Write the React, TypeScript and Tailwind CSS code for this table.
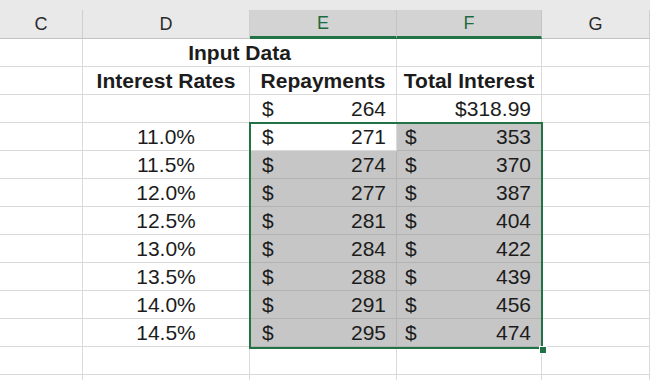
import React from 'react';

const grid = 'grid grid-cols-[83px_167px_147px_145px_1fr]';
const cell = 'h-[28px] border-r border-b border-[#dadada] flex items-center text-[21px] leading-none text-[#1c1c1c] overflow-hidden whitespace-nowrap';
const sel = 'h-[28px] border-r border-b border-[#b3b3b3] bg-[#c6c6c6] flex items-center text-[21px] leading-none text-[#1c1c1c] overflow-hidden whitespace-nowrap';

const rows = [
  { rate: '11.0%', pay: 271, int: 353 },
  { rate: '11.5%', pay: 274, int: 370 },
  { rate: '12.0%', pay: 277, int: 387 },
  { rate: '12.5%', pay: 281, int: 404 },
  { rate: '13.0%', pay: 284, int: 422 },
  { rate: '13.5%', pay: 288, int: 439 },
  { rate: '14.0%', pay: 291, int: 456 },
  { rate: '14.5%', pay: 295, int: 474 },
];

function ColHead({ label, active }: { label: string; active?: boolean }) {
  return (
    <div
      className={
        active
          ? 'h-[29px] bg-[#d3d3d3] border-r border-[#c4c4c4] border-b-[3px] border-b-[#217346] flex items-center justify-center text-[18px] text-[#1e6b41]'
          : 'h-[29px] border-r border-[#cfcfcf] border-b border-b-[#c2c2c2] flex items-center justify-center text-[18px] text-[#2b2b2b]'
      }
    >
      {label}
    </div>
  );
}

export default function App() {
  return (
    <div
      className="relative w-[650px] h-[380px] overflow-hidden bg-white"
      style={{ fontFamily: '"Liberation Sans", Arial, sans-serif' }}
    >
      {/* column headers */}
      <div className="bg-[#e9e9e9] pt-[10px]">
        <div className={grid}>
          <ColHead label="C" />
          <ColHead label="D" />
          <ColHead label="E" active />
          <ColHead label="F" active />
          <ColHead label="G" />
        </div>
      </div>

      {/* row 1 */}
      <div className={grid}>
        <div className={cell} />
        <div className={`${cell} col-span-2 justify-center font-bold`}>Input Data</div>
        <div className={cell} />
        <div className={cell} />
      </div>

      {/* row 2 */}
      <div className={grid}>
        <div className={cell} />
        <div className={`${cell} justify-center font-bold`}>Interest Rates</div>
        <div className={`${cell} justify-center font-bold`}>Repayments</div>
        <div className={`${cell} justify-center font-bold`}>Total Interest</div>
        <div className={cell} />
      </div>

      {/* row 3 */}
      <div className={grid}>
        <div className={cell} />
        <div className={cell} />
        <div className={`${cell} justify-between pl-[12px] pr-[10px]`}>
          <span>$</span>
          <span>264</span>
        </div>
        <div className={`${cell} justify-end pr-[10px]`}>$318.99</div>
        <div className={cell} />
      </div>

      {rows.map((r, i) => (
        <div key={r.rate} className={grid}>
          <div className={cell} />
          <div className={`${cell} justify-center`}>{r.rate}</div>
          <div className={`${i === 0 ? cell : sel} justify-between pl-[12px] pr-[10px]`}>
            <span>$</span>
            <span>{r.pay}</span>
          </div>
          <div className={`${sel} justify-between pl-[8px] pr-[10px]`}>
            <span>$</span>
            <span>{r.int}</span>
          </div>
          <div className={cell} />
        </div>
      ))}

      {[0, 1].map((k) => (
        <div key={k} className={grid}>
          <div className={cell} />
          <div className={cell} />
          <div className={cell} />
          <div className={cell} />
          <div className={cell} />
        </div>
      ))}

      {/* selection outline + fill handle */}
      <div className="absolute left-[249px] top-[122px] w-[294px] h-[227px] border-2 border-[#217346] pointer-events-none" />
      <div className="absolute left-[539px] top-[346px] w-[6px] h-[6px] bg-[#217346] border border-white box-content" />
    </div>
  );
}
